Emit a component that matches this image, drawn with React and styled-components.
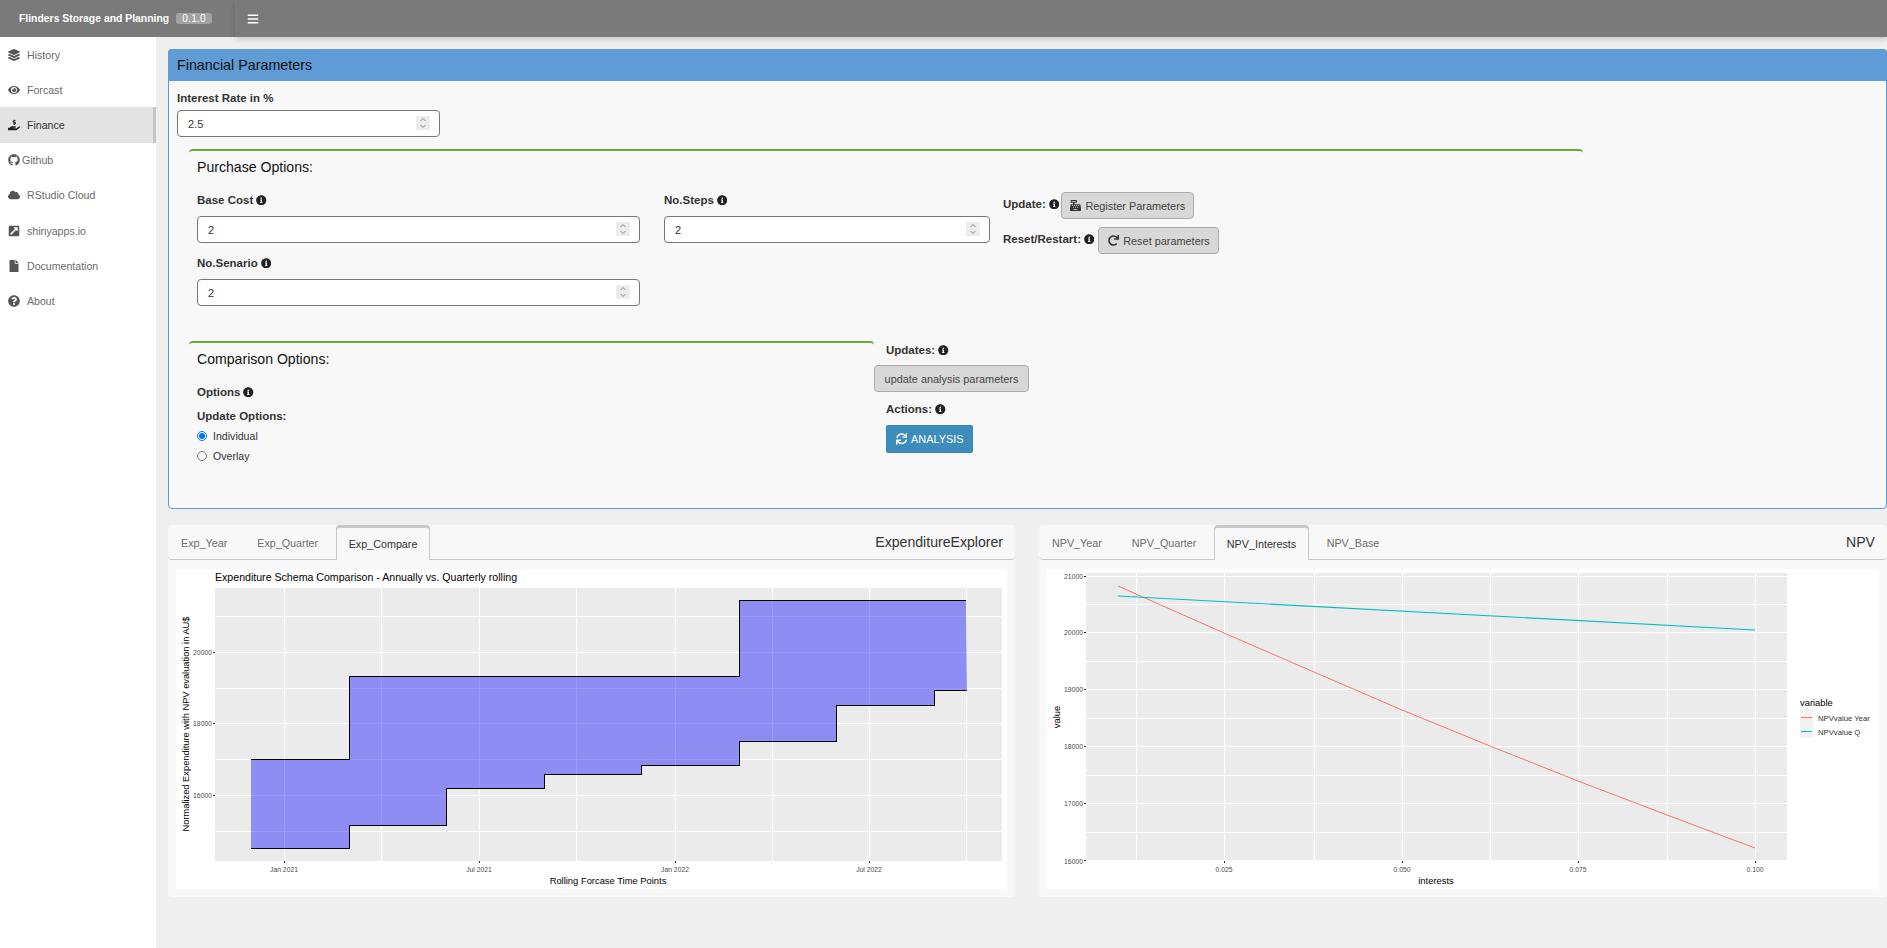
import React from "react";
import styled, { createGlobalStyle } from "styled-components";
import {
  FaLayerGroup, FaEye, FaHandHoldingUsd, FaGithub, FaCloud, FaExternalLinkSquareAlt,
  FaFile, FaQuestionCircle, FaInfoCircle, FaCashRegister, FaRedo, FaSync, FaBars,
} from "react-icons/fa";

const Global = createGlobalStyle`
  html, body { margin: 0; padding: 0; height: 100%; background: #efefef; overflow: hidden; }
  body, button, input { font-family: "Liberation Sans", Arial, sans-serif; }
  * { box-sizing: border-box; }
`;

const Page = styled.div`
  width: 1887px;
  height: 948px;
  display: flex;
  flex-direction: column;
  background: #efefef;
`;
const TopBar = styled.header`
  height: 37px;
  flex: none;
  display: flex;
  background: #7a7a7a;
  color: #fff;
`;
const Logo = styled.div`
  width: 236px;
  display: flex;
  align-items: center;
  padding-left: 19px;
  border-right: 1px solid #858585;
  font-size: 10.4px;
  font-weight: 700;
  white-space: nowrap;
`;
const Badge = styled.span`
  margin-left: 7px;
  width: 36px;
  height: 11px;
  border-radius: 3px;
  background: #a3a3a3;
  font-size: 10px;
  font-weight: 400;
  line-height: 11px;
  text-align: center;
  letter-spacing: 0.3px;
`;
const NavBar = styled.div`
  flex: 1;
  display: flex;
  align-items: center;
  padding-left: 11px;
  box-shadow: 0 2px 6px rgba(0, 0, 0, 0.18);
  font-size: 12px;
`;
const Body = styled.div`
  flex: 1;
  display: flex;
  min-height: 0;
`;
const Sidebar = styled.nav`
  width: 156px;
  flex: none;
  background: #fff;
`;
const NavItem = styled.div`
  height: 35.2px;
  display: flex;
  align-items: center;
  padding-left: 8px;
  font-size: 10.6px;
  color: ${(p) => (p.$active ? "#333" : "#6b6b6b")};
  background: ${(p) => (p.$active ? "#e4e4e4" : "transparent")};
  border-right: 3px solid ${(p) => (p.$active ? "#c6c6c6" : "transparent")};
`;
const NavIcon = styled.span`
  width: ${(p) => (p.$narrow ? 14 : 19)}px;
  display: flex;
  font-size: 12px;
  color: ${(p) => (p.$active ? "#222" : "#555")};
`;
const Main = styled.main`
  flex: 1;
  min-width: 0;
  padding: 12px 0 0 12px;
`;
const ParamBox = styled.section`
  height: 460px;
  border: 1px solid #5b9bd5;
  border-radius: 4px;
  background: #f8f8f8;
`;
const BoxHead = styled.div`
  height: 32px;
  margin: -1px -1px 0;
  padding-left: 9px;
  display: flex;
  align-items: center;
  background: #5f9bd5;
  border-radius: 4px 4px 0 0;
  color: #111;
  font-size: 14.3px;
`;
const BoxBody = styled.div`
  padding: 10px 8px 0;
`;
const FieldLabel = styled.div`
  display: flex;
  align-items: center;
  gap: 3px;
  height: 14px;
  font-size: 11.5px;
  font-weight: 700;
  color: #333;
  white-space: nowrap;
`;
const Info = styled(FaInfoCircle)`
  font-size: 10.5px;
  color: #222;
  flex: none;
`;
const NumberBox = styled.div`
  position: relative;
  width: ${(p) => p.$w}px;
  height: 27px;
  margin-top: ${(p) => p.$top ?? 9}px;
`;
const Input = styled.input`
  display: block;
  width: 100%;
  height: 100%;
  padding: 0 10px;
  border: 1px solid #777;
  border-radius: 4px;
  background: #fff;
  color: #333;
  font-size: 11px;
  outline: none;
  appearance: textfield;
  &::-webkit-inner-spin-button { appearance: none; margin: 0; }
`;
const Spinner = styled.svg`
  position: absolute;
  top: 6px;
  right: 10px;
  width: 14px;
  height: 14px;
  background: #ececec;
`;
const SubBox = styled.div`
  width: ${(p) => p.$w}px;
  flex: none;
  margin-left: ${(p) => p.$left ?? 0}px;
  margin-top: ${(p) => p.$top ?? 0}px;
  padding: 0 8px;
  border-top: 2px solid #6fa83f;
  border-top-left-radius: 4px;
  border-top-right-radius: 4px;
`;
const SubTitle = styled.div`
  font-size: 14.1px;
  color: #111;
  line-height: 18px;
  padding-top: 7px;
`;
const PurchaseGrid = styled.div`
  display: grid;
  grid-template-columns: 443px 326px auto;
  column-gap: 24px;
  margin-top: 17px;
`;
const Field = styled.div`
  margin-bottom: ${(p) => p.$bottom ?? 0}px;
`;
const Actions = styled.div`
  margin: -1px 0 0 -11px;
  display: flex;
  flex-direction: column;
  gap: 8px;
`;
const ActionRow = styled.div`
  display: flex;
  align-items: center;
  gap: ${(p) => p.$gap}px;
`;
const RowLabel = styled(FieldLabel)`
  margin-top: -3px;
`;
const Button = styled.button`
  display: inline-flex;
  align-items: center;
  justify-content: center;
  gap: 4px;
  height: 27px;
  width: ${(p) => p.$w}px;
  margin-top: ${(p) => p.$top ?? 0}px;
  padding: 0;
  border: 1px solid #ababab;
  border-radius: 4px;
  background: #d8d8d8;
  color: #444;
  font-size: 10.9px;
  white-space: nowrap;
  svg { font-size: 11px; color: #333; }
`;
const PrimaryButton = styled(Button)`
  height: 28px;
  border: 1px solid #3a87b3;
  border-radius: 2px;
  background: #3c8dbc;
  color: #fff;
  svg { color: #fff; font-size: 11.5px; }
`;
const CompareRow = styled.div`
  display: flex;
  margin-top: 35px;
`;
const Radio = styled.label`
  display: flex;
  align-items: center;
  gap: 6px;
  height: 20px;
  margin-top: ${(p) => p.$top ?? 0}px;
  font-size: 10.6px;
  color: #333;
  input { width: 10px; height: 10px; margin: 0; }
`;
const CompareFields = styled.div`
  margin-top: 17px;
  display: flex;
  flex-direction: column;
`;
const UpdateLabel = styled(FieldLabel)`
  margin-top: 10px;
`;
const AnalysisCol = styled.div`
  margin: 2px 0 0 0;
  display: flex;
  flex-direction: column;
  align-items: flex-start;
`;
const Indented = styled.div`
  margin-left: 12px;
  margin-top: ${(p) => p.$top ?? 0}px;
`;
const ChartsRow = styled.div`
  display: grid;
  grid-template-columns: 847px 848px;
  column-gap: 24px;
  margin-top: 16px;
`;
const TabBox = styled.section`
  height: 372px;
  background: #f8f8f8;
  border-radius: 4px;
`;
const TabHeader = styled.div`
  height: 35px;
  display: flex;
  align-items: flex-end;
  padding-left: 1px;
  border-bottom: 1px solid #c8c8c8;
  border-radius: 4px;
`;
const Tab = styled.div`
  height: 35px;
  padding: 0 ${(p) => (p.$active ? 11.5 : 12)}px;
  margin-right: 6px;
  margin-bottom: -1px;
  display: flex;
  align-items: center;
  font-size: 10.75px;
  color: ${(p) => (p.$active ? "#333" : "#6e6e6e")};
  white-space: nowrap;
  ${(p) =>
    p.$active
      ? `
    background: #f8f8f8;
    border: 1px solid #c8c8c8;
    border-top: 3px solid #c8c8c8;
    border-bottom: none;
    border-radius: 4px 4px 0 0;
  `
      : ""}
`;
const TabTitle = styled.div`
  margin-left: auto;
  margin-right: 12px;
  align-self: center;
  font-size: 14.1px;
  color: #333;
`;
const PlotWrap = styled.div`
  padding: 9px 8px 8px;
`;
const PlotSvg = styled.svg`
  display: block;
  background: #fff;
  text { font-family: "Liberation Sans", Arial, sans-serif; }
`;

const Grid = ({ panel, majorX, minorX, majorY, minorY }) => {
  const [x0, y0, x1, y1] = panel;
  return (
    <g shapeRendering="crispEdges">
      <rect x={x0} y={y0} width={x1 - x0} height={y1 - y0} fill="#ebebeb" />
      {minorY.map((y) => <line key={y} x1={x0} x2={x1} y1={y} y2={y} stroke="#fff" strokeWidth="1" />)}
      {minorX.map((x) => <line key={x} x1={x} x2={x} y1={y0} y2={y1} stroke="#fff" strokeWidth="1" />)}
      {majorY.map((y) => <line key={y} x1={x0} x2={x1} y1={y} y2={y} stroke="#fff" strokeWidth="1" />)}
      {majorX.map((x) => <line key={x} x1={x} x2={x} y1={y0} y2={y1} stroke="#fff" strokeWidth="1" />)}
      {majorY.map((y) => <line key={y} x1={x0 - 2} x2={x0} y1={y} y2={y} stroke="#333" strokeWidth="1" />)}
      {majorX.map((x) => <line key={x} x1={x} x2={x} y1={y1} y2={y1 + 2} stroke="#333" strokeWidth="1" />)}
    </g>
  );
};

const TickY = ({ x, y, children }) => (
  <text x={x} y={y + 2.5} fontSize="6.8" fill="#4d4d4d" textAnchor="end">{children}</text>
);
const TickX = ({ x, y, children }) => (
  <text x={x} y={y} fontSize="6.8" fill="#4d4d4d" textAnchor="middle">{children}</text>
);

const ExpenditurePlot = () => {
  const upper = "251,759 349,759 349,676 739,676 739,600 966,600";
  const lower = "967,690 934,690 934,705 836,705 836,741 739,741 739,765 641,765 641,774 544,774 544,788 446,788 446,825 349,825 349,848 251,848";
  return (
    <PlotSvg width="831" height="320" viewBox="176 569 831 320">
      <Grid
        panel={[215, 588, 1002, 861]}
        majorX={[284, 479, 675, 869]}
        minorX={[381, 576, 772, 966]}
        majorY={[652, 723, 795]}
        minorY={[616, 688, 759, 831]}
      />
      <polygon points={`${upper} ${lower}`} fill="rgba(0,0,255,0.4)" />
      <polyline points={upper} fill="none" stroke="#000" strokeWidth="1" shapeRendering="crispEdges" />
      <polyline points={lower} fill="none" stroke="#000" strokeWidth="1" shapeRendering="crispEdges" />
      <text x="215" y="581" fontSize="10.6" fill="#000">Expenditure Schema Comparison - Annually vs. Quarterly rolling</text>
      <TickY x={212} y={652}>20000</TickY>
      <TickY x={212} y={723}>18000</TickY>
      <TickY x={212} y={795}>16000</TickY>
      <TickX x={284} y={872}>Jan 2021</TickX>
      <TickX x={479} y={872}>Jul 2021</TickX>
      <TickX x={675} y={872}>Jan 2022</TickX>
      <TickX x={869} y={872}>Jul 2022</TickX>
      <text x="608" y="884" fontSize="9.4" fill="#000" textAnchor="middle">Rolling Forcase Time Points</text>
      <text transform="translate(189 724) rotate(-90)" fontSize="9.3" fill="#000" textAnchor="middle">Normalized Expenditure with NPV evaluation in AU$</text>
    </PlotSvg>
  );
};

const NpvPlot = () => {
  const red = "1118,586 1224,633 1314,672 1402,710 1490,746 1578,781 1667,815 1755,848";
  return (
    <PlotSvg width="832" height="320" viewBox="1047 569 832 320">
      <Grid
        panel={[1086, 573, 1787, 861]}
        majorX={[1224, 1402, 1578, 1755]}
        minorX={[1136, 1314, 1490, 1667]}
        majorY={[576, 632, 689, 746, 803, 860]}
        minorY={[604, 661, 718, 775, 832]}
      />
      <polyline points={red} fill="none" stroke="#f8766d" strokeWidth="1" />
      <polyline points="1118,596 1755,630" fill="none" stroke="#00bfc4" strokeWidth="1.1" />
      {[[576, "21000"], [632, "20000"], [689, "19000"], [746, "18000"], [803, "17000"], [861, "16000"]].map(([y, t]) => (
        <TickY key={t} x={1083} y={y}>{t}</TickY>
      ))}
      <TickX x={1224} y={872}>0.025</TickX>
      <TickX x={1402} y={872}>0.050</TickX>
      <TickX x={1578} y={872}>0.075</TickX>
      <TickX x={1755} y={872}>0.100</TickX>
      <text x="1436" y="884" fontSize="9.4" fill="#000" textAnchor="middle">interests</text>
      <text transform="translate(1060 717) rotate(-90)" fontSize="9.4" fill="#000" textAnchor="middle">value</text>
      <text x="1800" y="706" fontSize="9.4" fill="#000">variable</text>
      <rect x="1800" y="710" width="13" height="28" fill="#f2f2f2" />
      <line x1="1801" x2="1812" y1="717" y2="717" stroke="#f8766d" strokeWidth="1" shapeRendering="crispEdges" />
      <line x1="1801" x2="1812" y1="731" y2="731" stroke="#00bfc4" strokeWidth="1" shapeRendering="crispEdges" />
      <text x="1818" y="721" fontSize="7.7" fill="#333">NPVvalue Year</text>
      <text x="1818" y="735" fontSize="7.7" fill="#333">NPVvalue Q</text>
    </PlotSvg>
  );
};

const navItems = [
  ["History", FaLayerGroup],
  ["Forcast", FaEye],
  ["Finance", FaHandHoldingUsd, true],
  ["Github", FaGithub, false, true],
  ["RStudio Cloud", FaCloud],
  ["shinyapps.io", FaExternalLinkSquareAlt],
  ["Documentation", FaFile],
  ["About", FaQuestionCircle],
];

const Labelled = ({ children }) => (
  <FieldLabel>{children}<Info /></FieldLabel>
);

const NumberInput = ({ value, width, top }) => (
  <NumberBox $w={width} $top={top}>
    <Input type="number" step="any" defaultValue={value} />
    <Spinner viewBox="0 0 14 14" fill="none" stroke="#8a8a8a" strokeWidth="1">
      <path d="M4.5 5 7 2.5 9.5 5M4.5 9 7 11.5 9.5 9" />
    </Spinner>
  </NumberBox>
);

const NumberField = ({ label, width, bottom }) => (
  <Field $bottom={bottom}>
    <Labelled>{label}</Labelled>
    <NumberInput value="2" width={width} />
  </Field>
);

export default function App() {
  return (
    <Page>
      <Global />
      <TopBar>
        <Logo>Flinders Storage and Planning<Badge>0.1.0</Badge></Logo>
        <NavBar><FaBars /></NavBar>
      </TopBar>
      <Body>
        <Sidebar>
          {navItems.map(([label, Icon, active, narrow]) => (
            <NavItem key={label} $active={active}>
              <NavIcon $active={active} $narrow={narrow}><Icon /></NavIcon>
              {label}
            </NavItem>
          ))}
        </Sidebar>
        <Main>
          <ParamBox>
            <BoxHead>Financial Parameters</BoxHead>
            <BoxBody>
              <FieldLabel>Interest Rate in %</FieldLabel>
              <NumberInput value="2.5" width={263} top={5} />
              <SubBox $w={1394} $left={12} $top={12}>
                <SubTitle>Purchase Options:</SubTitle>
                <PurchaseGrid>
                  <div>
                    <NumberField label="Base Cost" width={443} bottom={13} />
                    <NumberField label="No.Senario" width={443} />
                  </div>
                  <NumberField label="No.Steps" width={326} />
                  <Actions>
                    <ActionRow $gap={2}>
                      <RowLabel>Update: <Info /></RowLabel>
                      <Button $w={133}><FaCashRegister />Register Parameters</Button>
                    </ActionRow>
                    <ActionRow $gap={4}>
                      <RowLabel>Reset/Restart: <Info /></RowLabel>
                      <Button $w={121}><FaRedo />Reset parameters</Button>
                    </ActionRow>
                  </Actions>
                </PurchaseGrid>
              </SubBox>
              <CompareRow>
                <SubBox $w={685} $left={12}>
                  <SubTitle>Comparison Options:</SubTitle>
                  <CompareFields>
                    <Labelled>Options</Labelled>
                    <UpdateLabel>Update Options:</UpdateLabel>
                    <Radio $top={3}><input type="radio" name="opt" defaultChecked />Individual</Radio>
                    <Radio><input type="radio" name="opt" />Overlay</Radio>
                  </CompareFields>
                </SubBox>
                <AnalysisCol>
                  <Indented><Labelled>Updates:</Labelled></Indented>
                  <Button $w={155} $top={8}>update analysis parameters</Button>
                  <Indented $top={10}><Labelled>Actions:</Labelled></Indented>
                  <Indented $top={9}>
                    <PrimaryButton $w={87}><FaSync />ANALYSIS</PrimaryButton>
                  </Indented>
                </AnalysisCol>
              </CompareRow>
            </BoxBody>
          </ParamBox>
          <ChartsRow>
            <TabBox>
              <TabHeader>
                <Tab>Exp_Year</Tab>
                <Tab>Exp_Quarter</Tab>
                <Tab $active>Exp_Compare</Tab>
                <TabTitle>ExpenditureExplorer</TabTitle>
              </TabHeader>
              <PlotWrap><ExpenditurePlot /></PlotWrap>
            </TabBox>
            <TabBox>
              <TabHeader>
                <Tab>NPV_Year</Tab>
                <Tab>NPV_Quarter</Tab>
                <Tab $active>NPV_Interests</Tab>
                <Tab>NPV_Base</Tab>
                <TabTitle>NPV</TabTitle>
              </TabHeader>
              <PlotWrap><NpvPlot /></PlotWrap>
            </TabBox>
          </ChartsRow>
        </Main>
      </Body>
    </Page>
  );
}
